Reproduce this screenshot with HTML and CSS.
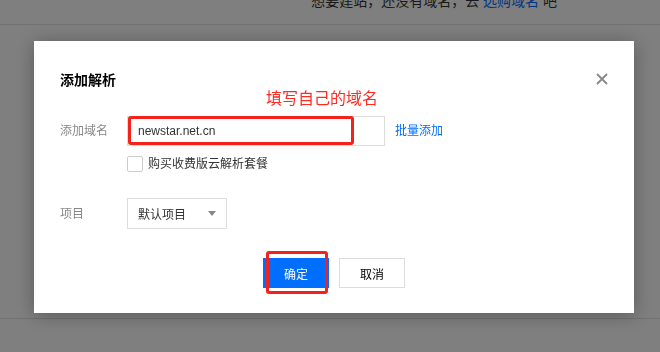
FILE: index.html
```html
<!DOCTYPE html>
<html lang="zh-CN">
<head>
<meta charset="utf-8">
<title>添加解析</title>
<link rel="stylesheet" href="styles.css">
</head>
<body>
<div class="page">
  <header class="topbar">
    <p class="notice">想要建站，还没有域名，去 <a class="notice-link">选购域名</a> 吧</p>
  </header>
  <main class="content"></main>
</div>
<div class="overlay">
  <div class="modal">
    <h2 class="title">添加解析</h2>
    <button class="close" aria-label="关闭">
      <svg width="12" height="12" viewBox="0 0 12 12"><path d="M1 1L11 11M11 1L1 11" stroke="#888" stroke-width="1.8" fill="none"/></svg>
    </button>
    <div class="form">
      <div class="row">
        <span class="label">添加域名</span>
        <div class="field">
          <input class="input" value="newstar.net.cn">
          <a class="link">批量添加</a>
        </div>
      </div>
      <div class="row row-check">
        <span class="label"></span>
        <label class="check"><span class="box"></span><span>购买收费版云解析套餐</span></label>
      </div>
      <div class="row row-project">
        <span class="label">项目</span>
        <div class="select"><span>默认项目</span><span class="caret"></span></div>
      </div>
    </div>
    <div class="footer">
      <button class="btn btn-primary">确定</button>
      <button class="btn">取消</button>
    </div>
    <span class="note">填写自己的域名</span>
    <span class="mark mark-input"></span>
    <span class="mark mark-btn"></span>
  </div>
</div>
</body>
</html>
```
FILE: styles.css
```css
* { box-sizing: border-box; }
html, body { margin: 0; padding: 0; }
body {
  width: 660px;
  height: 352px;
  overflow: hidden;
  background: #fff;
  font-family: "Liberation Sans", "Noto Sans CJK SC", sans-serif;
  color: #333;
}
.page { height: 352px; }
.topbar {
  height: 25px;
  border-bottom: 1px solid #e2e2e2;
  display: flex;
  justify-content: flex-end;
  padding-right: 103px;
  overflow: hidden;
}
.notice {
  margin: -9px 0 0;
  font-size: 14px;
  line-height: 20px;
  color: #333;
}
.notice-link { color: #006eff; }
.content {
  height: 294px;
  border-bottom: 1px solid #e2e2e2;
}
.overlay {
  position: fixed;
  inset: 0;
  background: rgba(0, 0, 0, 0.5);
  padding: 41px 0 0 34px;
}
.modal {
  position: relative;
  width: 600px;
  height: 272px;
  background: #fff;
  box-shadow: 0 2px 18px rgba(0, 0, 0, 0.3);
  padding: 29px 26px 0;
}
.title {
  margin: 0;
  font-size: 14px;
  line-height: 20px;
  font-weight: bold;
  color: #000;
}
.close {
  position: absolute;
  top: 31px;
  right: 25px;
  width: 14px;
  height: 14px;
  padding: 1px;
  border: 0;
  background: none;
  display: flex;
}
.form {
  margin-top: 26px;
  display: flex;
  flex-direction: column;
}
.row {
  display: grid;
  grid-template-columns: 67px 1fr;
  align-items: center;
  font-size: 12px;
}
.label { color: #888; line-height: 16px; }
.field { display: flex; align-items: center; }
.input {
  width: 258px;
  height: 30px;
  border: 1px solid #ddd;
  padding: 0 10px;
  font: 12px "Liberation Sans", "Noto Sans CJK SC", sans-serif;
  color: #333;
  outline: none;
}
.link { margin-left: 10px; color: #006eff; line-height: 16px; }
.row-check { margin-top: 10px; }
.check {
  display: flex;
  align-items: center;
  gap: 5px;
  line-height: 16px;
  color: #333;
}
.box {
  width: 16px;
  height: 16px;
  border: 1px solid #ccc;
  border-radius: 2px;
  background: #fff;
}
.row-project { margin-top: 26px; }
.select {
  width: 100px;
  height: 31px;
  border: 1px solid #ddd;
  display: flex;
  align-items: center;
  justify-content: space-between;
  padding: 0 10px;
  color: #333;
}
.caret {
  width: 0;
  height: 0;
  border-left: 4px solid transparent;
  border-right: 4px solid transparent;
  border-top: 5px solid #888;
}
.footer {
  margin: 29px -26px 0;
  display: flex;
  justify-content: center;
  gap: 10px;
}
.btn {
  width: 66px;
  height: 30px;
  border: 1px solid #ddd;
  background: #fff;
  font: 12px "Liberation Sans", "Noto Sans CJK SC", sans-serif;
  color: #000;
  padding: 0;
}
.btn-primary {
  background: #006eff;
  border-color: #006eff;
  color: #fff;
}
.note {
  position: absolute;
  left: 232px;
  top: 48px;
  font-size: 16px;
  line-height: 20px;
  color: #ff2a22;
}
.mark {
  position: absolute;
  border: 3px solid #f5221b;
  border-radius: 3px;
}
.mark-input { left: 94px; top: 75px; width: 226px; height: 29px; }
.mark-btn { left: 232px; top: 210px; width: 62px; height: 43px; }
```
